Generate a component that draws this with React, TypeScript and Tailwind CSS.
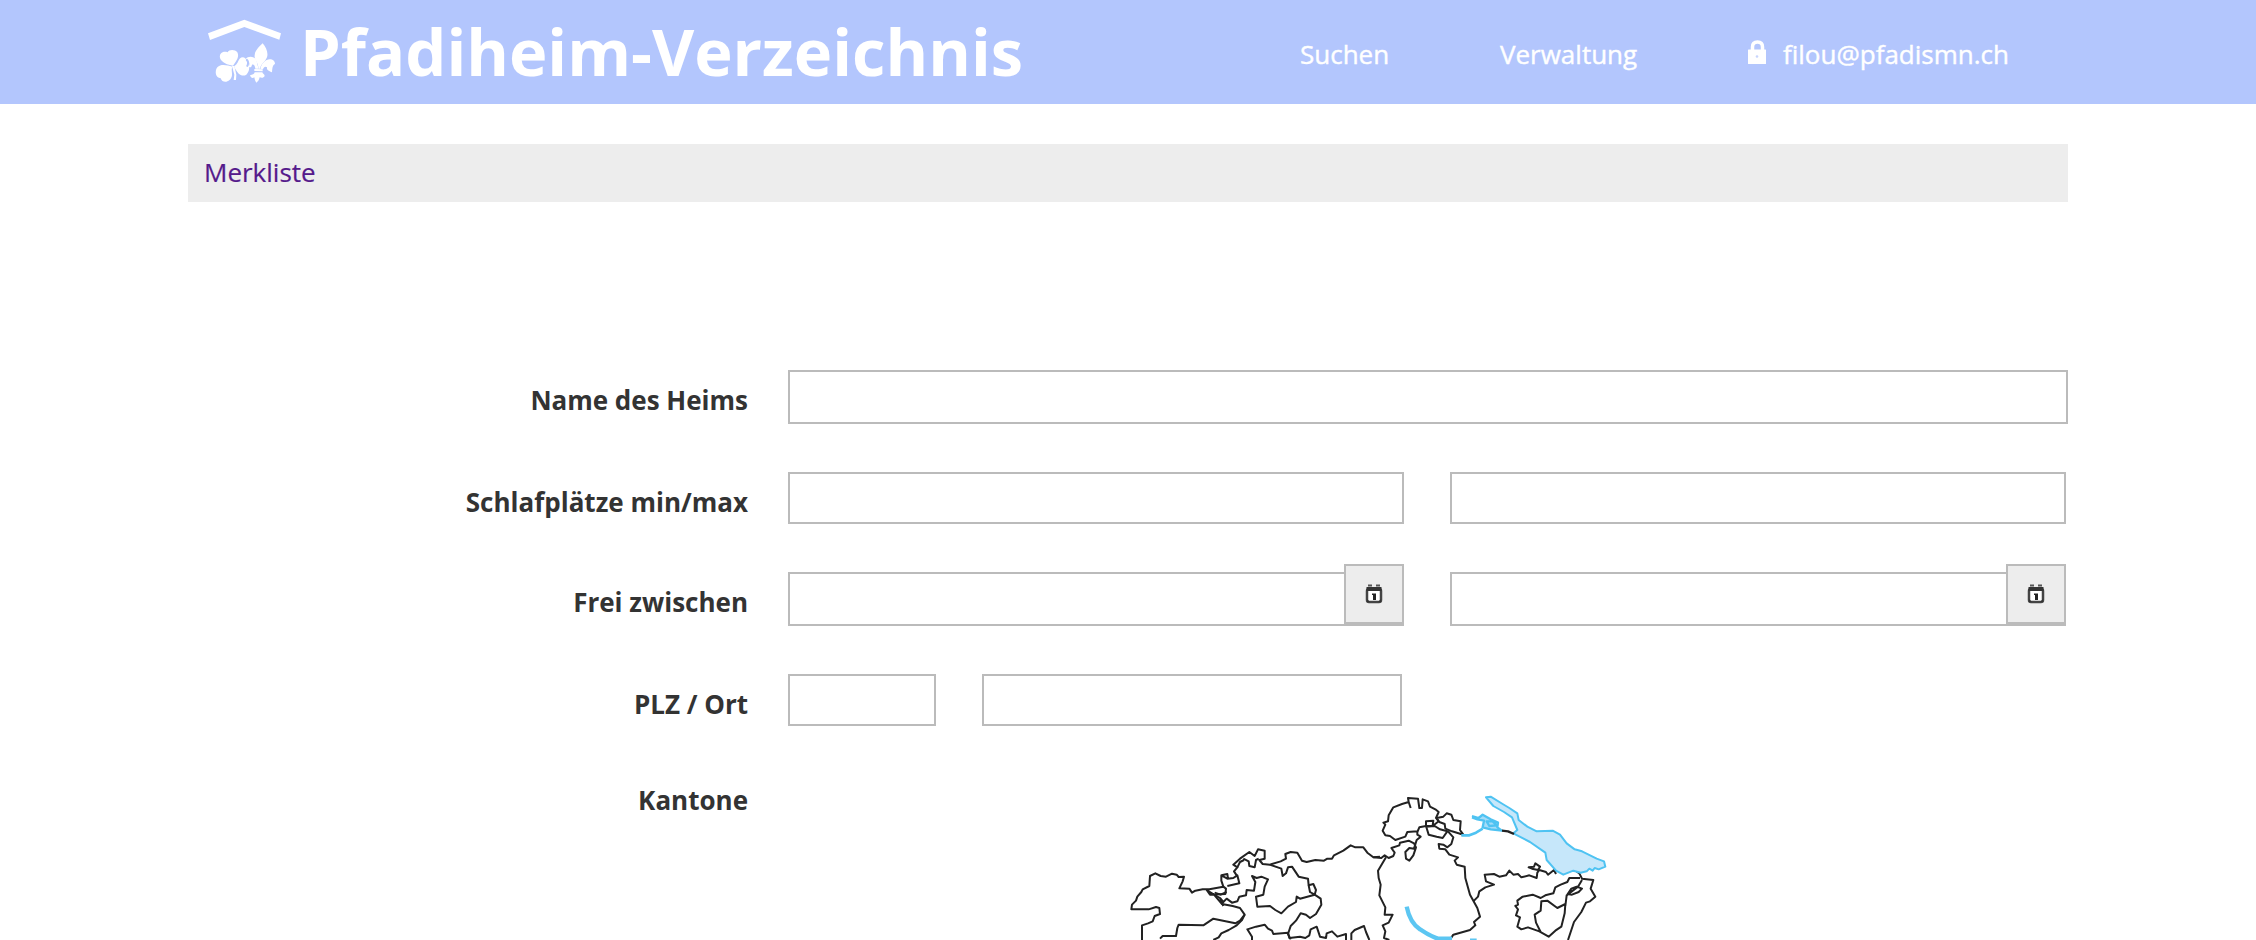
import React from "react";

const mapLines = [
  "M66 480L66 436L84 430L98 424L104 408L120 402L118 384L108 381L86 388L34 388L36 374L48 362L52 350L64 336L68 328L88 318L90 288L106 280L122 288L138 290L156 281L170 284L176 291L192 290L188 304L178 325L208 326L216 338L226 332L248 328L268 328L310 320L318 326L316 342L270 344L260 330L282 344L306 372L338 378L360 384L374 404L360 422L346 430L280 416L250 436L176 434L172 444L168 468L128 468L120 476",
  "M374 404L366 420L350 436L326 450L304 460L296 472L280 480",
  "M310 320L304 302L304 286L322 296L340 294L352 286L358 310L322 318M304 286L322 282L324 296M350 286L342 274L352 262L340 254L360 236L388 216L404 228L414 208L434 212L434 236L418 240L428 252L450 254L482 244L498 236L496 222L512 216L532 218L546 242L560 246L586 240L612 242L622 236L636 236L642 226L670 212L692 196L706 202L730 202L742 218L760 232L780 230",
  "M370 236L386 244L388 258L404 262L408 240L416 236M372 240L360 246L352 262M450 254L484 266L488 288L498 280L504 262L516 260L536 290L564 296L566 316L580 312L588 330L584 344L602 356L604 374L588 402L570 414L558 404L542 400L528 422L512 438L504 462L512 478",
  "M566 316L570 336L584 344L540 356L530 350L528 366L504 380L484 400L466 390L450 378L412 380L408 350L430 344L434 320L444 298L424 290L410 294L396 288L406 306L402 332L380 330L378 346L358 350L352 364L336 368L320 356L310 366L300 354L286 346M284 338L302 344L320 336M300 354L310 378",
  "M396 480L396 470L382 448L408 440L434 434L444 446L456 452L460 462L504 458L508 474L540 470L556 474L568 466L572 448L590 440L600 470L618 474L620 460L636 454L652 470L678 462L678 480M694 480L694 460L704 450L732 438L738 456L748 480",
  "M760 232L784 234L794 226L806 234L820 228L824 218L814 204L838 196L840 188L866 182L882 190L888 202L880 226L868 242L858 236L856 216L868 204L882 206L890 180L902 170L892 164L892 154L862 156L856 170L826 180L810 168L796 166L788 152L796 134L790 128L804 124L806 106L820 82L846 72L866 66L864 54L894 56L898 84L906 84L908 58L924 64L930 80L946 88L956 96L948 114L956 124L938 138L918 138L918 124L940 122L938 136M892 156L898 142L918 138L926 164L950 170L968 174L982 154L960 148L944 138L918 140M866 66L872 84",
  "M950 114L970 110L980 100L994 104L1000 120L1022 124L1020 150L1030 164L996 154L976 146L974 132L958 126ZM984 154L1000 172L994 192L982 202L970 194L956 192L958 206L976 208L988 224L1014 232L1004 242L1010 254L1034 260L1036 294L1050 344L1060 362L1072 384L1080 410L1062 426L1066 436L1050 450L1000 464L992 476M798 232L774 272L776 294L782 314L778 346L796 382L794 404L818 404L806 428L788 436L796 454L792 474L808 480",
  "M1060 364L1074 350L1078 334L1096 322L1122 314L1098 304L1094 284L1122 282L1138 290L1158 286L1168 272L1180 284L1194 282L1204 292L1228 286L1250 294L1252 278L1258 270L1278 276L1284 284L1302 270L1308 282M1226 262L1242 260L1246 250L1260 260L1254 270L1236 266Z",
  "M1364 270L1378 280L1386 296L1420 300L1412 326L1426 350L1410 364L1398 368L1384 396L1362 426L1344 480M1380 294L1348 294L1342 306L1322 314L1306 322L1300 340L1276 346L1262 354L1238 344L1208 350L1192 362L1194 374L1186 378L1194 388L1188 406L1200 412L1192 440L1204 448L1224 442L1258 454L1286 470L1306 452L1324 440L1334 400L1336 372L1312 384L1282 362L1264 364L1262 392L1244 404L1248 428L1262 456M1336 378L1340 346L1374 320L1386 300M1342 344L1354 326L1370 320L1386 326L1376 336L1356 344L1342 342",
];

function CantonMap() {
  return (
    <svg className="h-[160px] w-[500px]" viewBox="0 0 1500 480" fill="none" strokeLinejoin="round">
      <g stroke="#222" strokeWidth="6">
        {mapLines.map((d) => (
          <path key={d} d={d} />
        ))}
      </g>
      <path
        d="M1098 52L1112 50L1148 72L1168 84L1192 100L1196 120L1222 140L1250 154L1298 152L1320 164L1340 190L1364 208L1386 214L1430 236L1452 244L1456 260L1436 268L1424 264L1418 272L1408 266L1400 274L1382 278L1360 272L1330 284L1308 272L1280 240L1276 218L1230 186L1180 160L1192 150L1176 112L1152 96L1120 78Z"
        fill="#c6e7fa"
        stroke="#4fc3f2"
        strokeWidth="6"
      />
      <path
        d="M1056 108L1076 114L1088 104L1112 118L1134 128L1132 142L1146 152L1112 148L1088 142L1092 122L1072 118L1056 112M1100 124L1118 124L1130 136L1108 138Z"
        fill="#a5dcf8"
        stroke="#4fc3f2"
        strokeWidth="7"
      />
      <path d="M1024 166L1048 166L1068 158L1088 146" stroke="#4fc3f2" strokeWidth="8" />
      <path d="M1146 152L1164 154L1182 162" stroke="#222" strokeWidth="7" />
      <path
        d="M860 380C866 410 878 434 900 448C920 462 940 474 968 480M950 476L996 476M1050 482L1070 482"
        stroke="#5cc6f2"
        strokeWidth="13"
      />
    </svg>
  );
}

function Logo() {
  return (
    <svg className="mt-[18px] h-[68px] w-[76px] shrink-0" viewBox="0 0 228 204" fill="#fff">
      <path d="M3 46L112 5L222 46L217 65L112 27L9 66Z" />
      <path d="M78 143C62 141 44 134 39 120C36 106 48 98 62 103C66 94 84 94 91 103C98 116 88 130 78 143Z" />
      <path d="M76 146C72 156 76 162 75 172C72 194 46 198 41 181C26 180 22 160 31 148C42 136 62 142 76 146Z" />
      <path d="M82 144C92 138 92 130 98 122C106 114 118 118 120 132C130 144 128 160 118 170C104 178 90 166 82 146Z" />
      <path d="M75 144L82 144L88 170L87 186L80 186L82 170Z" />
      <path d="M167 76C150 92 136 108 146 126C152 136 154 146 155 152L159 152C160 144 166 136 174 128C188 112 180 92 167 76Z" />
      <path d="M116 122C124 112 146 114 149 130C151 140 153 146 155 152L145 152C144 143 140 138 135 140C134 147 130 150 125 146C130 136 126 126 116 122Z" />
      <path d="M160 152C164 136 176 124 188 124C198 124 204 130 204 138C196 142 196 152 195 163C188 160 178 158 180 148C174 144 170 148 168 154Z" />
      <path d="M142 153L167 154L167 160L142 159Z" />
      <path d="M143 163L166 163C167 168 173 168 173 174C170 180 164 180 158 178C156 186 154 190 148 194C144 188 143 184 142 178C136 182 132 180 129 172C136 170 142 170 143 163Z" />
      <path d="M118 124C124 128 124 138 120 146" fill="none" stroke="#b3c6fd" strokeWidth="6" />
    </svg>
  );
}

function Lock() {
  return (
    <svg className="relative -top-[2px] mr-[17px] h-[24px] w-[18px]" viewBox="0 0 18 24">
      <path d="M4.500 10V7Q4.500 2 9.500 2Q14.500 2 14.500 7V10" fill="none" stroke="#fff" strokeWidth="3.500" />
      <rect y="9.500" width="18" height="14.500" rx="0.500" fill="#fff" />
      <circle cx="9" cy="16.500" r="1.300" fill="#c7d5fd" />
    </svg>
  );
}

function CalendarButton() {
  return (
    <button className="-mt-[10px] -mr-[2px] flex h-[60px] w-[60px] shrink-0 items-center justify-center border-2 border-[#bbb] bg-[#ededed]">
      <svg className="h-5 w-[18px]" viewBox="0 0 18 20">
        <rect x="2" y="5" width="14" height="13" rx="2" fill="#fff" stroke="#444" strokeWidth="2.500" />
        <path d="M1.500 5H16.500" stroke="#333" strokeWidth="4" />
        <path d="M3 1.500H7M11 1.500H15" stroke="#555" strokeWidth="2" />
        <path d="M7 9.500H11V16H8V11H7Z" fill="#222" />
        <path d="M2 15L5 18H2ZM16 15L13 18H16Z" fill="#333" />
      </svg>
    </button>
  );
}

const label = "w-[560px] shrink-0 text-right text-[26px] font-bold leading-9 text-[#333]";

export default function App() {
  return (
    <div className="h-[940px] w-[2256px] overflow-hidden bg-white font-['Open_Sans',sans-serif]">
      <header className="flex h-[104px] bg-[#b3c6fd] pl-[207px] text-white">
        <Logo />
        <h1 className="ml-[17px] w-[1000px] whitespace-nowrap text-[65px] font-bold leading-[102px]">Pfadiheim-Verzeichnis</h1>
        <nav className="flex h-[108px] items-center whitespace-nowrap text-[26px] [-webkit-text-stroke:0.4px_white]">
          <a className="w-[200px]">Suchen</a>
          <a className="w-[248px]">Verwaltung</a>
          <a className="flex items-center"><Lock />filou@pfadismn.ch</a>
        </nav>
      </header>
      <main className="ml-[188px] w-[1880px]">
        <div className="mt-[40px] flex h-[58px] items-center bg-[#ededed] pb-[2px] pl-4 text-[26px] text-[#551a8b] [-webkit-text-stroke:0.2px_#551a8b]">Merkliste</div>
        <form>
          <div className="mt-[168px] flex h-[102px]">
            <label className={`${label} mt-[12px]`}>Name des Heims</label>
            <input className="ml-10 h-[54px] w-[1280px] border-2 border-[#bbb]" />
          </div>
          <div className="flex h-[100px]">
            <label className={`${label} mt-[12px]`}>Schlafplätze min/max</label>
            <input className="ml-10 h-[52px] w-[616px] border-2 border-[#bbb]" />
            <input className="ml-[46px] h-[52px] w-[616px] border-2 border-[#bbb]" />
          </div>
          <div className="flex h-[102px]">
            <label className={`${label} mt-[12px]`}>Frei zwischen</label>
            <div className="ml-10 flex h-[54px] w-[616px] border-2 border-[#bbb]">
              <input className="h-[50px] w-[554px]" />
              <CalendarButton />
            </div>
            <div className="ml-[46px] flex h-[54px] w-[616px] border-2 border-[#bbb]">
              <input className="h-[50px] w-[554px]" />
              <CalendarButton />
            </div>
          </div>
          <div className="flex h-[106px]">
            <label className={`${label} mt-[12px]`}>PLZ / Ort</label>
            <input className="ml-10 h-[52px] w-[148px] border-2 border-[#bbb]" />
            <input className="ml-[46px] h-[52px] w-[420px] border-2 border-[#bbb]" />
          </div>
          <div className="flex">
            <label className={`${label} mt-[2px]`}>Kantone</label>
            <div className="ml-[372px]"><CantonMap /></div>
          </div>
        </form>
      </main>
    </div>
  );
}
